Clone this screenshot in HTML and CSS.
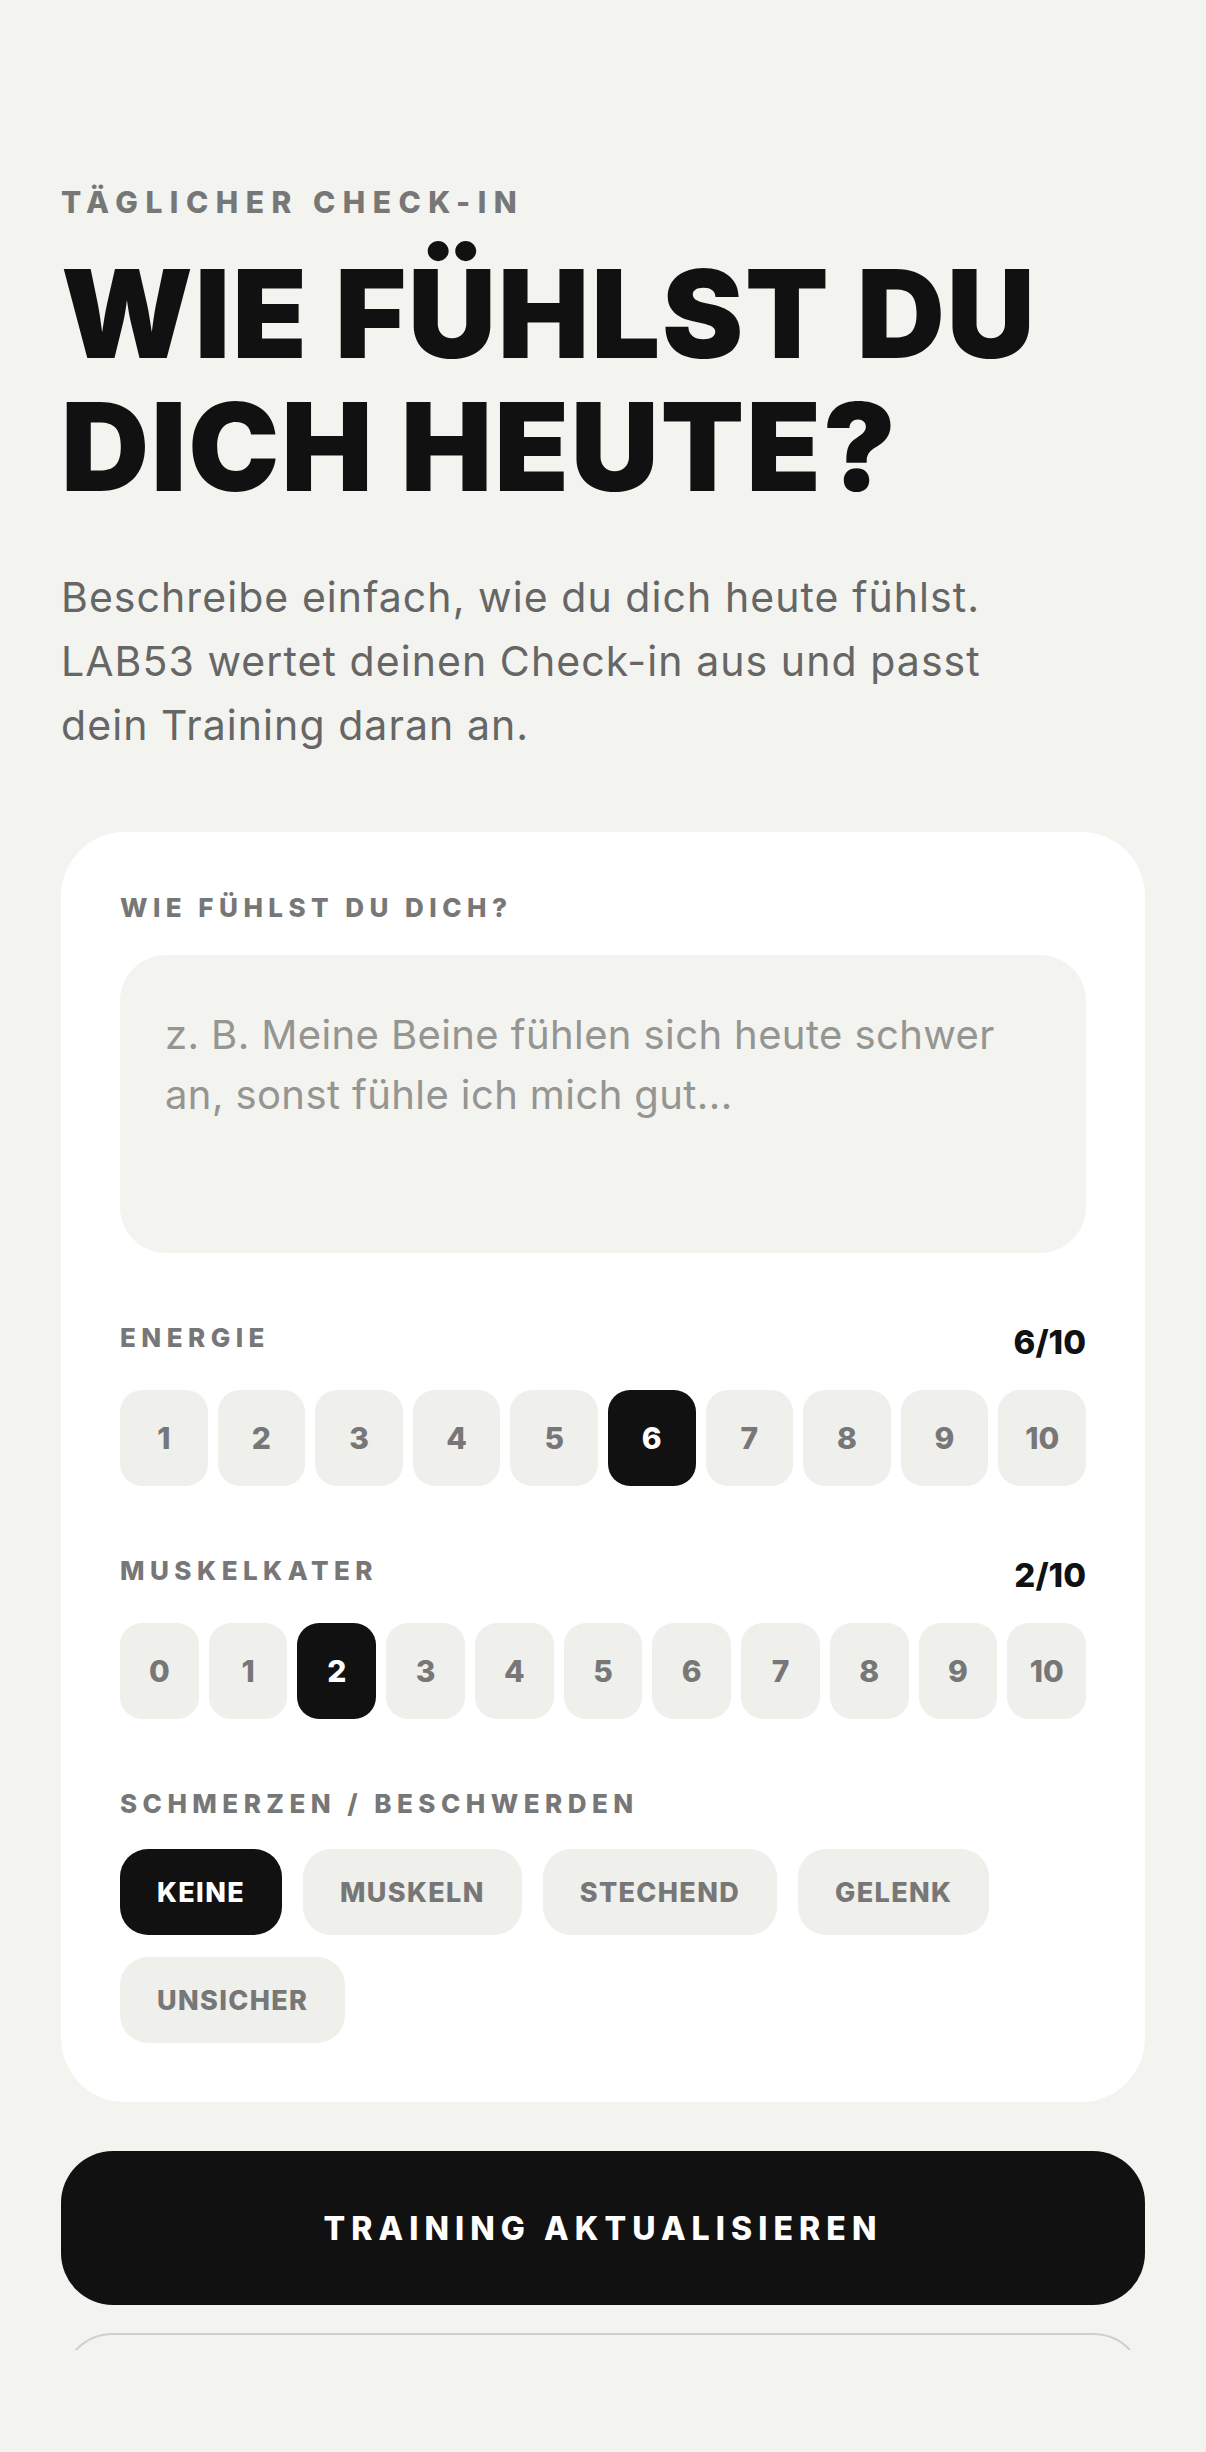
FILE: index.html
```html
<!DOCTYPE html>
<html lang="de">
<head>
	<meta charset="utf-8">
	<meta name="viewport" content="width=device-width">
	<title>Täglicher Check-in</title>
	<link rel="stylesheet" href="styles.css">
</head>
<body>

	<main class="checkin">
		<p class="eyebrow">Täglicher Check-in</p>
		<h1 class="title">Wie fühlst du dich heute?</h1>
		<p class="intro">
			Beschreibe einfach, wie du dich heute fühlst. LAB53 wertet deinen Check-in aus und passt dein Training daran an.
		</p>

		<section class="card">
			<label class="field-label" for="feeling">Wie fühlst du dich?</label>
			<textarea class="feeling" id="feeling" placeholder="z. B. Meine Beine fühlen sich heute schwer an, sonst fühle ich mich gut..."></textarea>

			<div class="scale-head">
				<span class="field-label">Energie</span>
				<span class="scale-value">6/10</span>
			</div>
			<div class="scale">
				<button class="scale-step">1</button>
				<button class="scale-step">2</button>
				<button class="scale-step">3</button>
				<button class="scale-step">4</button>
				<button class="scale-step">5</button>
				<button class="scale-step active">6</button>
				<button class="scale-step">7</button>
				<button class="scale-step">8</button>
				<button class="scale-step">9</button>
				<button class="scale-step">10</button>
			</div>

			<div class="scale-head">
				<span class="field-label">Muskelkater</span>
				<span class="scale-value">2/10</span>
			</div>
			<div class="scale">
				<button class="scale-step">0</button>
				<button class="scale-step">1</button>
				<button class="scale-step active">2</button>
				<button class="scale-step">3</button>
				<button class="scale-step">4</button>
				<button class="scale-step">5</button>
				<button class="scale-step">6</button>
				<button class="scale-step">7</button>
				<button class="scale-step">8</button>
				<button class="scale-step">9</button>
				<button class="scale-step">10</button>
			</div>

			<div class="scale-head">
				<span class="field-label">Schmerzen / Beschwerden</span>
			</div>
			<div class="chips">
				<button class="chip active">Keine</button>
				<button class="chip">Muskeln</button>
				<button class="chip">Stechend</button>
				<button class="chip">Gelenk</button>
				<button class="chip">Unsicher</button>
			</div>
		</section>

		<button class="btn btn-primary">Training aktualisieren</button>
		<button class="btn btn-secondary" aria-label="Weitere Optionen"></button>
	</main>

	<div class="bottom-bar"></div>

</body>
</html>
```

FILE: styles.css
```css
* {
	box-sizing: border-box;
	padding: 0;
	margin: 0;
}

body {
	background-color: #F3F3EF;
	color: #111;
	font-family: Inter, "Noto Sans", sans-serif;
}

button,
textarea {
	font-family: inherit;
	border: 0;
}

.checkin {
	display: flex;
	flex-direction: column;
	padding: 185px 61px 120px;
}

.eyebrow {
	font-size: 30px;
	line-height: 34px;
	font-weight: 800;
	letter-spacing: .25em;
	text-transform: uppercase;
	color: #777;
}

.title {
	margin-top: 28px;
	font-size: 122px;
	line-height: 133px;
	font-weight: 900;
	letter-spacing: .015em;
	text-transform: uppercase;
	color: #111;
}

.intro {
	max-width: 960px;
	margin-top: 52px;
	font-size: 41px;
	line-height: 64px;
	letter-spacing: .026em;
	color: #666;
}

/* card */

.card {
	display: flex;
	flex-direction: column;
	margin-top: 75px;
	padding: 56px 59px 59px;
	border-radius: 64px;
	background-color: #FFF;
}

.field-label {
	font-size: 26px;
	line-height: 40px;
	font-weight: 800;
	letter-spacing: .21em;
	text-transform: uppercase;
	color: #777;
}

.feeling {
	display: block;
	height: 298px;
	margin-top: 27px;
	padding: 50px 45px;
	border-radius: 46px;
	background-color: #F3F3EF;
	font-size: 40px;
	line-height: 60px;
	letter-spacing: .01em;
	color: #111;
	resize: none;
	outline: none;
}
.feeling::placeholder {
	color: #959592;
}

.scale-head {
	display: flex;
	justify-content: space-between;
	align-items: center;
	height: 40px;
	margin-top: 65px;
}

.scale-value {
	margin-top: 8px;
	font-size: 33px;
	line-height: 40px;
	font-weight: 800;
	color: #111;
}

.scale {
	display: flex;
	gap: 10px;
	margin-top: 32px;
}

.scale-step {
	flex: 1;
	height: 96px;
	border-radius: 22px;
	background-color: #EFEFEC;
	font-size: 30px;
	font-weight: 800;
	color: #777;
}
.scale-step.active {
	background-color: #111;
	color: #FFF;
}

.chips {
	display: flex;
	flex-wrap: wrap;
	gap: 22px 21px;
	margin-top: 25px;
}

.chip {
	height: 86px;
	padding: 0 37px;
	border-radius: 28px;
	background-color: #EFEFEC;
	font-size: 27px;
	font-weight: 800;
	letter-spacing: .05em;
	text-transform: uppercase;
	color: #777;
}
.chip.active {
	background-color: #111;
	color: #FFF;
}

/* actions */

.btn {
	width: 100%;
	height: 154px;
	border-radius: 52px;
	font-size: 32px;
	font-weight: 800;
	letter-spacing: .19em;
	text-transform: uppercase;
}

.btn-primary {
	margin-top: 49px;
	background-color: #111;
	color: #FFF;
}

.btn-secondary {
	margin-top: 28px;
	border: 2px solid #D0D0CB;
	background-color: transparent;
	color: #111;
}

.bottom-bar {
	position: fixed;
	left: 0;
	right: 0;
	bottom: 0;
	height: 102px;
	background-color: #F3F3EF;
}
```
